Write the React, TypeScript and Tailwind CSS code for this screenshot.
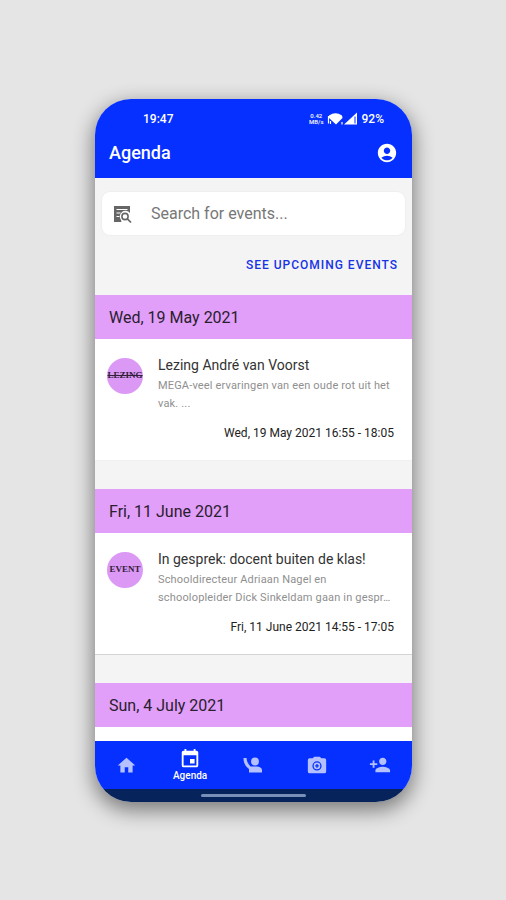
import React from "react";
import { MdHome, MdEvent, MdPersonAddAlt1, MdAccountCircle } from "react-icons/md";

type EventItem = { day: string; tag: string; tagClass: string; title: string; body: string; time: string; gap: string };

const events: EventItem[] = [
  {
    day: "Wed, 19 May 2021",
    tag: "LEZING",
    tagClass: "text-[9px] line-through decoration-1",
    title: "Lezing André van Voorst",
    body: "MEGA-veel ervaringen van een oude rot uit het vak. ...",
    time: "Wed, 19 May 2021 16:55 - 18:05",
    gap: "border-[#f0f0f0]",
  },
  {
    day: "Fri, 11 June 2021",
    tag: "EVENT",
    tagClass: "text-[9px]",
    title: "In gesprek: docent buiten de klas!",
    body: "Schooldirecteur Adriaan Nagel en schoolopleider Dick Sinkeldam gaan in gespr…",
    time: "Fri, 11 June 2021 14:55 - 17:05",
    gap: "border-[#d4d4d4]",
  },
];

function StatusIcons() {
  return (
    <svg width="34" height="14" viewBox="0 0 34 14" fill="#fff" aria-hidden="true">
      <path d="M5 3.500Q11.500-1 18 3.500L18.500 6L12 12.500L5 6Z" />
      <path d="M4.500 4v7.500M6.500 9v3M18 10v2.500" stroke="#fff" strokeWidth="1.200" />
      <path d="M20 12.500L33 .500V12.500Z" />
      <path d="M31 4.500v7" stroke="#0530ff" strokeWidth="1" />
    </svg>
  );
}

function SearchDocIcon() {
  return (
    <svg className="shrink-0" width="20" height="20" viewBox="0 0 20 20" fill="none" aria-hidden="true">
      <path d="M2 2h16v7a5.500 5.500 0 0 0-9 7l.500 2H2Z" fill="#666" />
      <path d="M4.500 5.500h11M4.500 9h4M4.500 12.500h3" stroke="#fff" strokeWidth="1.200" />
      <circle cx="13" cy="12.500" r="3.100" stroke="#666" strokeWidth="1.600" />
      <path d="M15.300 14.800L19 18.500" stroke="#666" strokeWidth="1.700" />
    </svg>
  );
}

function CameraPlusIcon() {
  return (
    <svg width="22" height="22" viewBox="0 0 24 24" fill="currentColor" aria-hidden="true">
      <path
        fillRule="evenodd"
        d="M9 3L7.200 4.500H4a2 2 0 0 0-2 2V19a2 2 0 0 0 2 2h16a2 2 0 0 0 2-2V6.500a2 2 0 0 0-2-2h-3.200L15 3Zm3 5a5 5 0 1 1 0 10 5 5 0 0 1 0-10Z"
      />
      <circle cx="12" cy="13" r="3.600" />
      <path d="M12 11v4M10 13h4" stroke="#0530ff" strokeWidth="1.400" />
    </svg>
  );
}

function WavingIcon() {
  return (
    <svg width="22" height="22" viewBox="0 0 22 22" fill="currentColor" aria-hidden="true">
      <circle cx="13" cy="7.500" r="3.900" />
      <path d="M1.500 4H4.500C5 7.500 6 10 8.500 12.500H14C17.500 12.500 20 14 20 16V18.500H7V15C3.500 12.500 1.500 9 1.500 4Z" />
    </svg>
  );
}

function DayHeader({ day }: { day: string }) {
  return <h2 className="flex h-11 items-center bg-[#e19ff9] px-3.5 pt-0.5 text-[16px] text-[#29202d]">{day}</h2>;
}

export default function App() {
  return (
    <div className="flex min-h-screen items-center justify-center bg-[#e5e5e5] pt-px pr-[94px] pl-[95px] font-[Roboto,sans-serif]">
      <div className="w-full max-w-[480px] overflow-hidden rounded-[36px] bg-[#f4f4f4] shadow-[0_7px_20px_2px_rgba(0,0,0,0.45)]">
        <header className="bg-[#0530ff] text-white">
          <div className="flex h-7 items-end justify-between pr-7 pl-12 text-[12px] leading-4 font-medium">
            <span>19:47</span>
            <div className="flex items-center">
              <span className="flex flex-col text-center text-[6px] leading-[6px]">
                <span>0.42</span>
                <span>MB/s</span>
              </span>
              <StatusIcons />
              <span className="ml-1">92%</span>
            </div>
          </div>
          <div className="flex h-[51px] items-center justify-between px-3.5">
            <h1 className="text-[18px] font-medium">Agenda</h1>
            <button aria-label="Account">
              <MdAccountCircle size={22} />
            </button>
          </div>
        </header>

        <main>
          <div className="px-[7px] pt-3.5">
            <label className="flex h-[43px] items-center rounded-lg bg-white pl-2.5 shadow-[0_0_2px_rgba(0,0,0,0.08)]">
              <SearchDocIcon />
              <input
                aria-label="Search for events"
                placeholder="Search for events..."
                className="ml-[19px] w-full min-w-0 bg-transparent text-[16px] outline-none placeholder:text-[#777]"
              />
            </label>
          </div>
          <div className="flex h-[60px] items-center justify-end px-3.5">
            <button className="text-[12px] font-medium tracking-[1px] text-[#1733e6]">SEE UPCOMING EVENTS</button>
          </div>

          {events.map((e) => (
            <section key={e.day}>
              <DayHeader day={e.day} />
              <article className={`flex h-[122px] gap-[15px] border-b bg-white pt-4 pr-3.5 pl-3 ${e.gap}`}>
                <div className="mt-[3px] flex size-9 shrink-0 items-center justify-center overflow-hidden rounded-full bg-[#dc98f5]">
                  <span className={`font-["Liberation_Serif",serif] font-bold text-[#332039] ${e.tagClass}`}>{e.tag}</span>
                </div>
                <div className="min-w-0 flex-1">
                  <h3 className="text-[14px] leading-5 text-[#333]">{e.title}</h3>
                  <p className="mt-0.5 text-[11px] leading-[18px] tracking-[0.015em] text-[#8f8f8f]">{e.body}</p>
                  <p className="mt-3 pr-1 text-right text-[12px] leading-4 text-[#222]">{e.time}</p>
                </div>
              </article>
              <div className="h-7" />
            </section>
          ))}
          <DayHeader day="Sun, 4 July 2021" />
          <div className="h-3.5 bg-white" />
        </main>

        <nav className="grid h-12 grid-cols-5 bg-[#0530ff] text-[#b4c0ff]">
          <button aria-label="Home" className="flex items-center justify-center">
            <MdHome size={21} />
          </button>
          <button className="flex flex-col items-center justify-center text-[10px] leading-3 font-medium text-white">
            <MdEvent size={22} />
            Agenda
          </button>
          <button aria-label="People" className="flex items-center justify-center">
            <WavingIcon />
          </button>
          <button aria-label="Add photo" className="flex items-center justify-center">
            <CameraPlusIcon />
          </button>
          <button aria-label="Add person" className="flex items-center justify-center">
            <MdPersonAddAlt1 size={22} className="-scale-x-100" />
          </button>
        </nav>
        <div className="flex h-[13px] items-center justify-center bg-[#06245b]">
          <div className="h-[3px] w-1/3 rounded-full bg-[#7890b8]" />
        </div>
      </div>
    </div>
  );
}
